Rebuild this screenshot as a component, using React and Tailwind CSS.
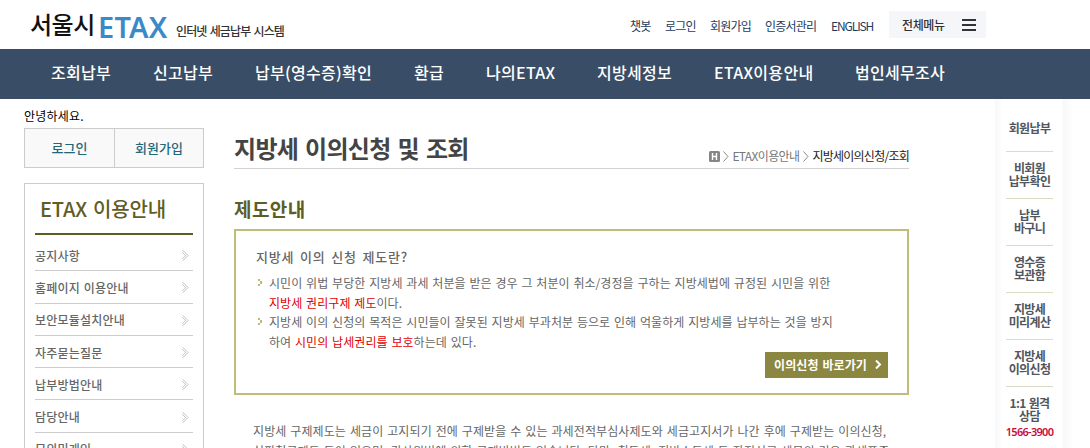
import clsx from "clsx";

const NAV_ITEMS = [
  { label: "조회납부", width: "w-[60px]" },
  { label: "신고납부", width: "w-[60px]" },
  { label: "납부(영수증)확인", width: "w-[117px]" },
  { label: "환급", width: "w-[30px]" },
  { label: "나의ETAX", width: "w-[69px]" },
  { label: "지방세정보", width: "w-[75px]" },
  { label: "ETAX이용안내", width: "w-[99px]" },
  { label: "법인세무조사", width: "w-[91px]" },
];

const UTIL_ITEMS = [
  { label: "챗봇", width: "w-[21px]" },
  { label: "로그인", width: "w-[31px]" },
  { label: "회원가입", width: "w-[41px]" },
  { label: "인증서관리", width: "w-[52px]" },
  { label: "ENGLISH", width: "w-[43px] tracking-[-1.1px]" },
];

const SIDE_ITEMS = [
  "공지사항",
  "홈페이지 이용안내",
  "보안모듈설치안내",
  "자주묻는질문",
  "납부방법안내",
  "담당안내",
  "모의민개인",
];

const QUICK_ITEMS = [
  ["회원납부"],
  ["비회원", "납부확인"],
  ["납부", "바구니"],
  ["영수증", "보관함"],
  ["지방세", "미리계산"],
  ["지방세", "이의신청"],
];

const Chevron = () => (
  <svg width="7" height="11" viewBox="0 0 7 11" fill="none" stroke="#999" strokeWidth="1">
    <path d="M1 .5 6 5.5 1 10.5M.5 2.5 3.5 5.5 .5 8.5" strokeDasharray="1 .5" />
  </svg>
);

const Bullet = () => (
  <svg className="absolute left-[2px] top-[6px]" width="4" height="7" viewBox="0 0 4 7" fill="#bdb976" shapeRendering="crispEdges">
    <path d="M0 0h2v2H0zM2 2h2v3H2zM0 5h2v2H0z" />
  </svg>
);

const Header = () => (
  <header className="h-[49px] flex">
    <div className="flex pl-[30px] w-[630px] whitespace-nowrap">
      <span className="w-[68px] text-[24px] leading-[48px] font-medium tracking-[-0.5px] text-[#111]">서울시</span>
      <span className="w-[78px] font-['Noto_Sans'] font-semibold text-[29px] leading-[53px] tracking-[0.2px] text-[#3b8ac8]">ETAX</span>
      <span className="text-[12px] leading-[61px] font-medium tracking-[-0.9px] [word-spacing:1.5px] text-[#333]">인터넷 세금납부 시스템</span>
    </div>
    <nav className="flex gap-[14px] w-[259px] text-[12px] leading-[51px] tracking-[-0.8px] text-[#1f3c5c] whitespace-nowrap">
      {UTIL_ITEMS.map(item => <a key={item.label} className={clsx("shrink-0", item.width)}>{item.label}</a>)}
    </nav>
    <button className="mt-[11px] w-[97px] h-[27px] bg-[#f4f6fa] flex items-center justify-between pl-[13px] pr-[10px] text-[12px] font-medium tracking-[-0.4px] text-[#333]">
      전체메뉴
      <span className="w-[14px] h-3 flex flex-col justify-between">
        <i className="h-[2px] bg-[#333]" />
        <i className="h-[2px] bg-[#333]" />
        <i className="h-[2px] bg-[#333]" />
      </span>
    </button>
  </header>
);

const Sidebar = () => (
  <aside className="w-[180px] shrink-0 pt-[9px]">
    <p className="h-5 text-[12px] leading-[15px] tracking-[0.2px] text-black">안녕하세요.</p>
    <div className="flex h-10 border border-[#ccc] bg-[#f9f9f9] text-[13px] leading-[38px] font-medium text-[#1e6878] text-center">
      <a className="w-[90px] border-r border-[#ccc]">로그인</a>
      <a className="flex-1">회원가입</a>
    </div>
    <div className="mt-[15px] h-[400px] border border-[#ccc] px-[10px]">
      <h2 className="h-[51px] pl-[5px] border-b-2 border-[#5f5d26] text-[20px] leading-[50px] font-medium tracking-[-0.15px] [word-spacing:1.5px] text-[#5f5d26]">ETAX 이용안내</h2>
      <ul className="pt-[4px]">
        {SIDE_ITEMS.map(item => (
          <li key={item} className="h-[32.3px] border-b border-[#ccc] flex items-center justify-between pr-[4px] pt-[2px] text-[12px] font-medium tracking-[0.2px] [word-spacing:1px] text-[#666]">
            {item}
            <Chevron />
          </li>
        ))}
      </ul>
    </div>
  </aside>
);

const Content = () => (
  <main className="w-[675px] ml-[30px] shrink-0 whitespace-nowrap">
    <div className="h-[70px] border-b border-[#d2d2d2] flex justify-between">
      <h1 className="pt-[30px] text-[24px] leading-[38px] font-bold tracking-[-0.7px] [word-spacing:2.2px] text-[#444]">지방세 이의신청 및 조회</h1>
      <div className="pt-[49px] flex text-[12px] leading-[16px] tracking-[-0.75px] text-[#777]">
        <svg className="mt-[3px] mr-[3px]" width="11" height="11" viewBox="0 0 11 11">
          <rect width="11" height="11" rx="1.5" fill="#858585" />
          <path d="M3.5 2v7M7.5 2v7M3.5 5.5h4" stroke="#fff" strokeWidth="1.4" />
        </svg>
        <svg className="mt-[3px] mr-[3px]" width="6" height="11" viewBox="0 0 6 11" fill="none" stroke="#888"><path d="m.5.5 4.5 5-4.5 5" /></svg>
        <span className="w-[68px] tracking-[-0.65px]">ETAX이용안내</span>
        <svg className="mt-[3px] mx-[3px]" width="6" height="11" viewBox="0 0 6 11" fill="none" stroke="#888"><path d="m.5.5 4.5 5-4.5 5" /></svg>
        <span className="text-[#222]">지방세이의신청/조회</span>
      </div>
    </div>
    <h2 className="h-[60px] pt-[26px] text-[19px] leading-[28px] font-bold tracking-[0.4px] text-[#5f5d26]">제도안내</h2>
    <section className="h-[166px] border-2 border-[#c0bc7b] pl-5 pr-[19px] pt-[15px]">
      <h3 className="h-[27px] text-[13px] leading-[22px] font-medium tracking-[0.8px] [word-spacing:2px] text-[#666]">지방세 이의 신청 제도란?</h3>
      <ul className="text-[12px] leading-[19.6px] tracking-[0.06px] [word-spacing:1.05px] text-[#666]">
        <li className="relative pl-[13px]">
          <Bullet />
          시민이 위법 부당한 지방세 과세 처분을 받은 경우 그 처분이 취소/경정을 구하는 지방세법에 규정된 시민을 위한<br />
          <span className="text-[#e10000]">지방세 권리구제 제도</span>이다.
        </li>
        <li className="relative pl-[13px]">
          <Bullet />
          지방세 이의 신청의 목적은 시민들이 잘못된 지방세 부과처분 등으로 인해 억울하게 지방세를 납부하는 것을 방지<br />
          하여 <span className="text-[#e10000]">시민의 납세권리를 보호</span>하는데 있다.
        </li>
      </ul>
      <a className="mt-px ml-auto w-[123px] h-[26px] bg-[#8b8740] flex items-center pl-[9px] pr-[6px] pb-px justify-between text-[12px] font-bold tracking-[0.1px] [word-spacing:1px] text-white">
        이의신청 바로가기
        <svg width="7" height="9" viewBox="0 0 7 9" fill="none" stroke="#fff" strokeWidth="2"><path d="m1 .5 4 4-4 4" /></svg>
      </a>
    </section>
    <p className="pt-[26px] pl-[19px] text-[12px] leading-[19.6px] tracking-[0.1px] [word-spacing:1.1px] text-[#666]">
      지방세 구제제도는 세금이 고지되기 전에 구제받을 수 있는 과세전적부심사제도와 세금고지서가 나간 후에 구제받는 이의신청,<br />
      심판청구제도 등이 있으며, 감사원법에 의한 구제방법도 있습니다. 다만, 취득세, 지방소득세 등 자진신고 세목의 경우 과세표준
    </p>
  </main>
);

const QuickMenu = () => (
  <aside className="ml-[86px] w-[79px] h-[349px] px-[11px] bg-[linear-gradient(90deg,#f8f8f8,#fff_8px,#fff_67px,#f8f8f8_68px,#fff)] text-center text-[12px] leading-[13px] font-bold tracking-[-0.65px] text-[#50565e] whitespace-nowrap">
    {QUICK_ITEMS.map((lines, i) => (
      <div key={lines.join("")} className={clsx("w-[47px] border-b border-[#dcdcc4] flex flex-col items-center justify-center", i === 0 ? "h-[53px] pt-[5px]" : "h-[47px] pb-[2px]")}>
        {lines.map(line => <span key={line}>{line}</span>)}
      </div>
    ))}
    <div className="w-[47px] pt-[9px] flex flex-col items-center">
      <span className="[word-spacing:1px]">1:1 원격</span>
      <span>상담</span>
      <b className="mt-[3px] font-['Noto_Sans'] text-[11px] font-semibold tracking-[-0.7px] text-[#cc0a3c]">1566-3900</b>
    </div>
  </aside>
);

const App = () => (
  <div className="w-[1090px] h-[448px] overflow-hidden bg-white font-['Noto_Sans_CJK_KR',sans-serif]">
    <Header />
    <nav className="h-[50px] bg-[#394e66] pl-[51px] flex gap-[42px] text-[16px] leading-[46px] font-medium tracking-[0.3px] text-white whitespace-nowrap">
      {NAV_ITEMS.map(item => <a key={item.label} className={clsx("shrink-0", item.width)}>{item.label}</a>)}
    </nav>
    <div className="flex pl-6">
      <Sidebar />
      <Content />
      <QuickMenu />
    </div>
  </div>
);

export default App;
